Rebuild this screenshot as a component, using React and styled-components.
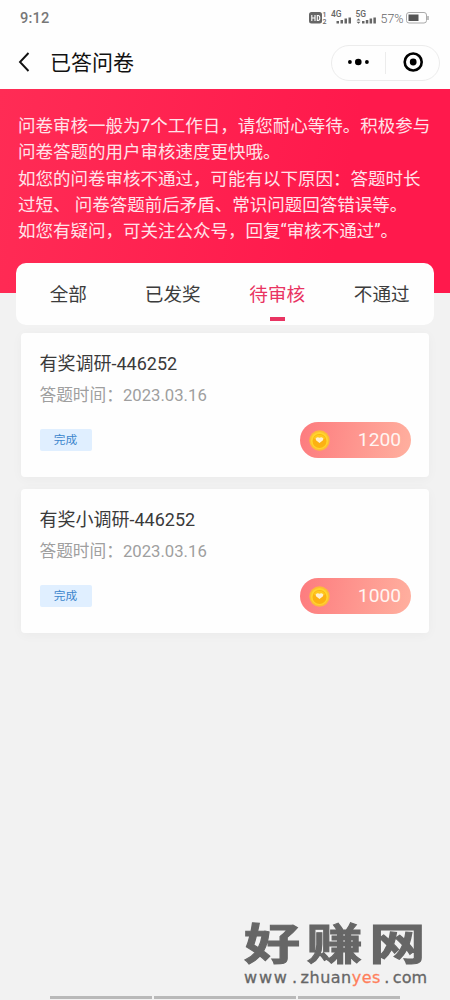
import React from 'react';
import styled, { createGlobalStyle } from 'styled-components';

const Global = createGlobalStyle`
  * { box-sizing: border-box; }
  body { margin: 0; background: #f2f2f2; font-family: Roboto, "Noto Sans CJK SC", sans-serif; color: #333; }
`;

const Screen = styled.div`
  width: 450px;
  height: 1000px;
  display: flex;
  flex-direction: column;
  overflow: hidden;
  background: #f2f2f2;
`;

const StatusBar = styled.header`
  height: 36px;
  flex: none;
  display: flex;
  align-items: center;
  justify-content: space-between;
  padding: 0 20px;
  background: #fefefe;
`;

const Clock = styled.span`
  font-size: 14.6px;
  font-weight: 500;
  letter-spacing: 0.2px;
  color: #777;
`;

const NavBar = styled.nav`
  height: 53px;
  flex: none;
  display: flex;
  align-items: center;
  padding: 0 10px 0 18px;
  background: #fefefe;
`;

const PageTitle = styled.h1`
  margin: 0 auto 0 20px;
  font-size: 21px;
  line-height: 30px;
  font-weight: 400;
  color: #111;
`;

const Capsule = styled.div`
  width: 109px;
  height: 36px;
  display: flex;
  align-items: center;
  border: 1px solid #ececec;
  border-radius: 18px;
`;

const CapsuleHalf = styled.div`
  flex: 1;
  height: 22px;
  display: flex;
  align-items: center;
  justify-content: center;
  & + & { border-left: 1px solid #ececec; }
`;

const Banner = styled.section`
  height: 204px;
  flex: none;
  padding: 24px 18px 0;
  background: linear-gradient(100deg, #ff2c55, #ff194c 75%);
`;

const Notice = styled.p`
  margin: 0;
  font-size: 17.5px;
  line-height: 26.25px;
  white-space: nowrap;
  color: #ffe3e9;
`;

const Tabs = styled.div`
  height: 62px;
  flex: none;
  display: flex;
  margin: -30px 16px 8px;
  background: #fefefe;
  border-radius: 10px;
`;

const Tab = styled.div`
  flex: 1;
  display: flex;
  flex-direction: column;
  align-items: center;
  padding-top: 18px;
  font-size: 18.6px;
  line-height: 28px;
  color: ${(p) => (p.$active ? '#e93462' : '#3c3c3c')};
  &::after {
    content: '';
    width: 15px;
    height: 4px;
    margin-top: 8px;
    background: ${(p) => (p.$active ? '#e93462' : 'transparent')};
  }
`;

const Card = styled.article`
  height: 144px;
  flex: none;
  display: flex;
  flex-direction: column;
  margin: 0 21px 12.4px;
  padding: 17px 18px 19px 18.5px;
  background: #fefefe;
  border-radius: 4px;
  box-shadow: 0 2px 12px rgba(0, 0, 0, 0.035);
`;

const CardTitle = styled.h2`
  margin: 0;
  font-size: 18px;
  line-height: 27px;
  font-weight: 400;
  color: #3a3a3a;
`;

const CardDate = styled.p`
  margin: 5.5px 0 0;
  font-size: 16.7px;
  line-height: 26px;
  color: #9f9f9f;
`;

const CardFooter = styled.div`
  display: flex;
  align-items: center;
  justify-content: space-between;
  margin-top: auto;
`;

const Tag = styled.span`
  width: 52px;
  height: 22px;
  border-radius: 2px;
  background: #e0efff;
  color: #3d86cc;
  font-size: 11.7px;
  line-height: 22px;
  text-align: center;
`;

const Reward = styled.div`
  width: 111px;
  height: 36px;
  display: flex;
  align-items: center;
  justify-content: space-between;
  padding: 0 10px 0 9px;
  border-radius: 18px;
  background: linear-gradient(100deg, #fd7b7e, #ffb09f);
  color: #fff5f2;
  font-size: 19.2px;
  line-height: 36px;
`;

const Brand = styled.footer`
  width: 183px;
  margin: auto 23px 10px auto;
  color: #666;
`;

const BrandName = styled.div`
  width: 142px;
  font-family: "Noto Sans CJK SC", sans-serif;
  font-size: 43.5px;
  font-weight: 700;
  line-height: 44px;
  letter-spacing: 5px;
  white-space: nowrap;
  transform: scaleX(1.29);
  transform-origin: left;
  -webkit-text-stroke: 1px #666;
`;

const BrandUrl = styled.div`
  display: flex;
  justify-content: space-between;
  margin-top: 6px;
  font-family: "DejaVu Sans", sans-serif;
  font-size: 16px;
  line-height: 15px;
  -webkit-text-stroke: 0.3px;
`;

const UrlPart = styled.span`
  letter-spacing: ${(p) => p.$spacing || 0}px;
  color: ${(p) => (p.$accent ? '#ff7f5c' : '#666')};
`;

const HomeBar = styled.div`
  height: 5px;
  flex: none;
  display: flex;
  gap: 2px;
  padding: 0 50px;
`;

const HomeSegment = styled.i`
  flex: ${(p) => p.$grow};
  height: 3px;
  margin-top: 1px;
  background: #b9b9b9;
`;

const StatusIcons = () => (
  <svg width="122" height="18" viewBox="0 0 122 18" fontFamily="Roboto, sans-serif" fill="#666">
    <rect x="1" y="3" width="13" height="11.5" rx="2.5" />
    <path d="M3.8 6v6M7 6v6M3.8 9h3.2M9.3 6.5h.8q1.7 0 1.7 2.5t-1.7 2.5h-.8z" stroke="#fff" strokeWidth="1.1" fill="none" />
    <text x="14.5" y="7.8" fontSize="7" fontWeight="500">1</text>
    <text x="14.5" y="14.5" fontSize="7" fontWeight="500">2</text>
    <text x="23" y="8.2" fontSize="8.5" fontWeight="500">4G</text>
    <path d="M28.5 12H31v2.5h-2.5zM32.5 11H35v3.5h-2.5zM36.5 9.500H39v5h-2.5zM40.500 8.500H43v6h-2.5z" />
    <text x="47.5" y="8.2" fontSize="8.5" fontWeight="500">5G</text>
    <path d="M48.5 11.500l2-2 2 2zM48.500 12.700l2 2 2-2zM54 12h2.500v2.500H54zM57.800 11h2.500v3.500h-2.500zM61.600 9.500h2.500v5h-2.500zM65.400 8.500h2.500v6h-2.500z" />
    <text x="72.5" y="14.3" fontSize="12.8" fontWeight="300" textLength="23" lengthAdjust="spacingAndGlyphs">57%</text>
    <rect x="98.5" y="3.5" width="20" height="10.5" rx="2.5" fill="none" stroke="#aaa" />
    <path d="M120 7v4" stroke="#aaa" strokeWidth="1.5" />
    <rect x="100.5" y="5.5" width="10" height="6.5" fill="#555" />
  </svg>
);

const BackIcon = () => (
  <svg width="12" height="22" viewBox="0 0 12 22" fill="none" stroke="#111" strokeWidth="1.9">
    <path d="M10.5 1L2 10l8.5 9" />
  </svg>
);

const MoreIcon = () => (
  <svg width="22" height="10" viewBox="0 0 22 10" fill="#000">
    <circle cx="1.9" cy="4" r="1.9" />
    <circle cx="10.3" cy="4" r="3.3" />
    <circle cx="18.9" cy="4" r="1.9" />
  </svg>
);

const CloseIcon = () => (
  <svg width="20" height="22" viewBox="0 0 20 22">
    <circle cx="10.2" cy="10" r="8.5" fill="none" stroke="#000" strokeWidth="2.6" />
    <circle cx="10.2" cy="10" r="3.4" />
  </svg>
);

const CoinIcon = () => (
  <svg width="21" height="21" viewBox="0 0 21 21">
    <circle cx="10.5" cy="10.5" r="10.2" fill="#fdbc36" />
    <circle cx="10.5" cy="10.5" r="8.6" fill="#ffd62c" />
    <circle cx="10.5" cy="11" r="7" fill="#fcb113" />
    <path d="M4.5 8.5a6.6 6.6 0 0 1 12 0l-6 1z" fill="#ffc91f" />
    <path d="M10.5 12.9L7 10.2Q5.9 8.2 7.8 7.500q1.600-.4 2.700.3 1.100-.7 2.700-.3 1.900.7.8 2.700z" fill="#fff0d0" />
  </svg>
);

const notice = [
  '问卷审核一般为7个工作日，请您耐心等待。积极参与',
  '问卷答题的用户审核速度更快哦。',
  '如您的问卷审核不通过，可能有以下原因：答题时长',
  '过短、 问卷答题前后矛盾、常识问题回答错误等。',
  '如您有疑问，可关注公众号，回复“审核不通过”。',
];

const tabs = ['全部', '已发奖', '待审核', '不通过'];

const surveys = [
  { title: '有奖调研-446252', date: '2023.03.16', reward: 1200 },
  { title: '有奖小调研-446252', date: '2023.03.16', reward: 1000 },
];

export default function App() {
  return (
    <Screen>
      <Global />
      <StatusBar>
        <Clock>9:12</Clock>
        <StatusIcons />
      </StatusBar>
      <NavBar>
        <BackIcon />
        <PageTitle>已答问卷</PageTitle>
        <Capsule>
          <CapsuleHalf><MoreIcon /></CapsuleHalf>
          <CapsuleHalf><CloseIcon /></CapsuleHalf>
        </Capsule>
      </NavBar>
      <Banner>
        {notice.map((line) => <Notice key={line}>{line}</Notice>)}
      </Banner>
      <Tabs>
        {tabs.map((name) => <Tab key={name} $active={name === '待审核'}>{name}</Tab>)}
      </Tabs>
      {surveys.map((s) => (
        <Card key={s.title}>
          <CardTitle>{s.title}</CardTitle>
          <CardDate>答题时间：{s.date}</CardDate>
          <CardFooter>
            <Tag>完成</Tag>
            <Reward><CoinIcon />{s.reward}</Reward>
          </CardFooter>
        </Card>
      ))}
      <Brand>
        <BrandName>好赚网</BrandName>
        <BrandUrl>
          <UrlPart $spacing={1.8}>www</UrlPart>
          <UrlPart>.</UrlPart>
          <span>
            <UrlPart $spacing={0.5}>zhuan</UrlPart>
            <UrlPart $spacing={0.5} $accent>yes</UrlPart>
          </span>
          <UrlPart>.</UrlPart>
          <UrlPart>com</UrlPart>
        </BrandUrl>
      </Brand>
      <HomeBar>
        <HomeSegment $grow={102} />
        <HomeSegment $grow={141} />
        <HomeSegment $grow={102} />
      </HomeBar>
    </Screen>
  );
}
